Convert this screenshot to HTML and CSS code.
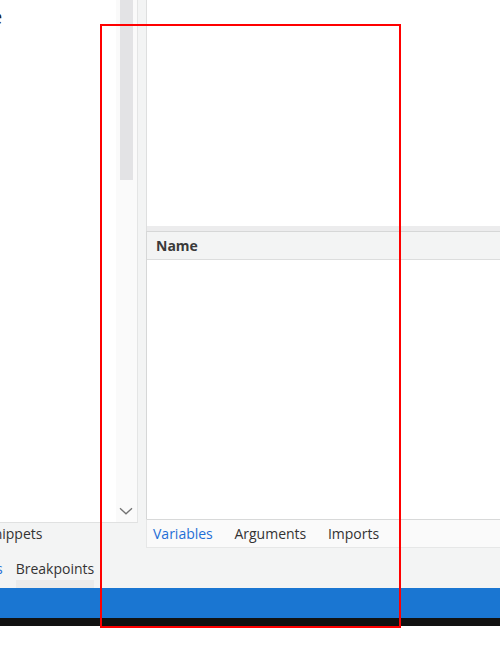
FILE: index.html
```html
<!DOCTYPE html>
<html>
<head>
<meta charset="utf-8">
<link rel="stylesheet" href="styles.css">
</head>
<body>
<div class="app">
  <div class="main">
    <div class="left">
      <div class="left-scroll">
        <div class="left-content"><span class="cut-word">Source</span></div>
        <div class="vscroll">
          <div class="thumb"></div>
          <svg class="chev" width="14" height="8" viewBox="0 0 14 8"><path d="M1 1.2 L7 6.8 L13 1.2" fill="none" stroke="#737373" stroke-width="1.3"/></svg>
        </div>
      </div>
      <div class="left-tabs">
        <div class="ltab-row1"><span class="snip">Snippets</span></div>
        <div class="ltab-row2">
          <span class="ltab-active">Sources</span><span class="ltab">Breakpoints</span>
        </div>
        <div class="ltab-bar"></div>
      </div>
    </div>
    <div class="right">
      <div class="top-pane"></div>
      <div class="splitter"></div>
      <div class="table">
        <div class="thead">Name</div>
        <div class="tbody"></div>
      </div>
      <div class="tabs">
        <span class="tab active">Variables</span>
        <span class="tab">Arguments</span>
        <span class="tab">Imports</span>
      </div>
      <div class="rest"></div>
    </div>
  </div>
  <div class="status"></div>
  <div class="black"></div>
</div>
<div class="annot"></div>
</body>
</html>
```

FILE: styles.css
```css
html, body {
  margin: 0;
  padding: 0;
  background: #ffffff;
}
body {
  width: 500px;
  height: 652px;
  overflow: hidden;
  position: relative;
  font-family: "Open Sans", "Noto Sans", sans-serif;
  font-size: 14px;
  color: #333333;
}
.app {
  display: flex;
  flex-direction: column;
}
.main {
  display: flex;
  height: 588px;
  background: #f3f4f4;
}
.left {
  width: 146px;
  display: flex;
  flex-direction: column;
}
.left-scroll {
  display: flex;
  width: 138px;
  height: 523px;
  box-sizing: border-box;
  border-right: 1px solid #e4e5e5;
  border-bottom: 1px solid #e0e1e1;
  background: #ffffff;
}
.left-content {
  width: 116px;
  overflow: hidden;
  padding-top: 5px;
  box-sizing: border-box;
}
.cut-word {
  display: inline-block;
  font-size: 20px;
  line-height: 24px;
  color: #1e1e1e;
  margin-left: -62px;
}
.vscroll {
  width: 21px;
  background: #fafafa;
  display: flex;
  flex-direction: column;
  align-items: flex-start;
}
.thumb {
  width: 13px;
  height: 180px;
  margin-left: 4px;
  background: #e3e3e5;
}
.chev {
  margin-top: auto;
  margin-bottom: 7px;
  margin-left: 3px;
}
.left-tabs {
  flex: 1;
  overflow: hidden;
  white-space: nowrap;
}
.ltab-row1 {
  height: 22px;
  line-height: 22px;
}
.snip {
  display: inline-block;
  margin-left: -14px;
}
.ltab-row2 {
  padding-top: 14px;
  height: 20px;
  line-height: 20px;
}
.ltab-active {
  display: inline-block;
  color: #1f6fd6;
  margin-left: -49px;
}
.ltab {
  display: inline-block;
  margin-left: 13px;
}
.ltab-bar {
  margin-top: 1px;
  margin-left: 16px;
  width: 78px;
  height: 8px;
  background: #ebebeb;
}
.right {
  flex: 1;
  display: flex;
  flex-direction: column;
}
.top-pane {
  height: 226px;
  background: #ffffff;
  border-left: 1px solid #dedfdf;
}
.splitter {
  height: 5px;
  background: #ececed;
  border-left: 1px solid #dedfdf;
}
.table {
  border-top: 1px solid #d6d7d7;
  border-left: 1px solid #d6d7d7;
}
.thead {
  height: 27px;
  line-height: 28px;
  padding-left: 9px;
  background: #f3f4f4;
  border-bottom: 1px solid #dcdddd;
  font-weight: 700;
  color: #3a3a3a;
}
.tbody {
  height: 259px;
  background: #ffffff;
}
.tabs {
  height: 27px;
  line-height: 27px;
  padding-left: 6px;
  background: #fafafa;
  border-top: 1px solid #d8d9d9;
  border-bottom: 1px solid #e6e7e7;
  border-left: 1px solid #e6e7e7;
  white-space: nowrap;
}
.tab {
  display: inline-block;
  margin-right: 18px;
  color: #333333;
}
.tab.active {
  color: #1f6fd6;
}
.rest {
  flex: 1;
}
.status {
  height: 30px;
  background: #1a76d2;
}
.black {
  height: 8px;
  background: #111111;
}
.annot {
  position: absolute;
  left: 100px;
  top: 24px;
  width: 301px;
  height: 604px;
  box-sizing: border-box;
  border: 2px solid #ff0000;
}
```
